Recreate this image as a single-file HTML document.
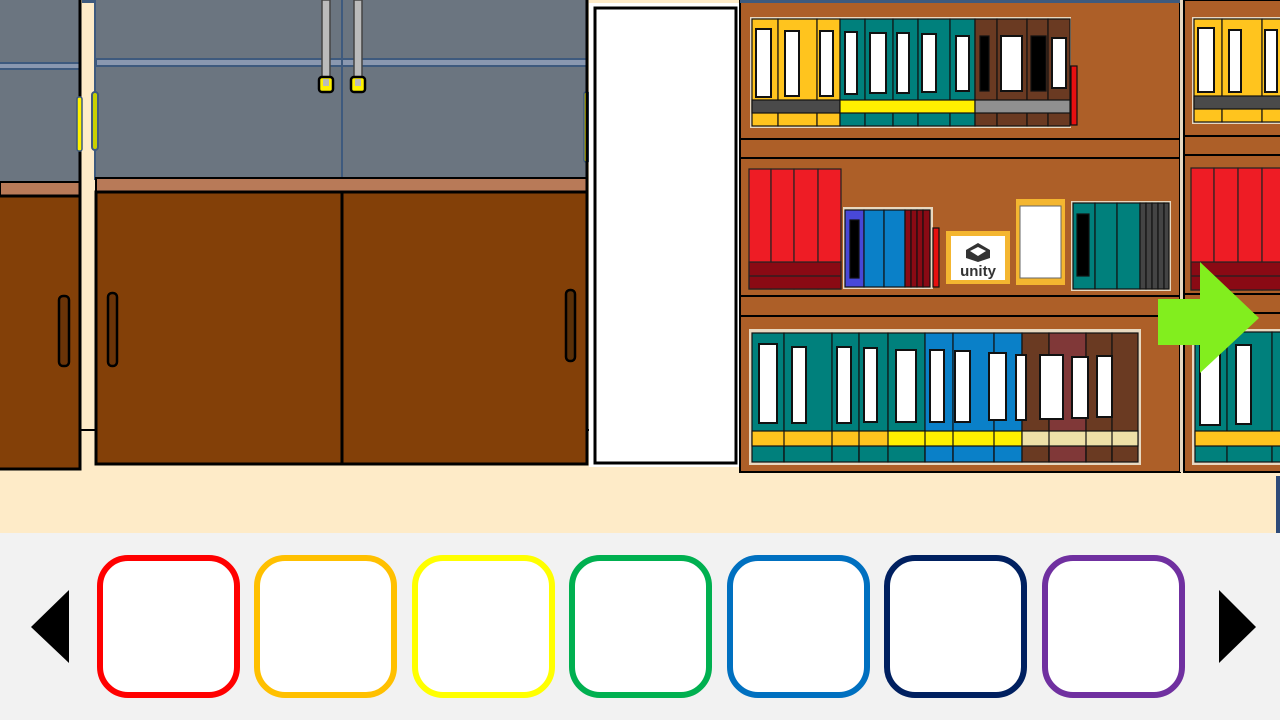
<!DOCTYPE html>
<html><head><meta charset="utf-8"><style>
html,body{margin:0;padding:0;width:1280px;height:720px;overflow:hidden;background:#F2F2F2}
svg{display:block}
</style></head><body>
<svg width="1280" height="720" viewBox="0 0 1280 720" xmlns="http://www.w3.org/2000/svg">
<rect x="0" y="0" width="1280" height="533" fill="#FEEBC8"/>
<rect x="0" y="533" width="1280" height="187" fill="#F2F2F2"/>

<!-- left cabinet -->
<rect x="0" y="0" width="80" height="183" fill="#6B7580"/>
<rect x="0" y="62" width="80" height="8" fill="#3E5A7E"/>
<rect x="0" y="64" width="80" height="4" fill="#8A98B0"/>
<rect x="0" y="182" width="80" height="14" fill="#B87A58" stroke="#000" stroke-width="2"/>
<rect x="-2" y="196" width="82" height="273" fill="#834008" stroke="#000" stroke-width="3"/>
<line x1="80" y1="0" x2="80" y2="470" stroke="#000" stroke-width="3"/>
<rect x="77" y="97" width="5" height="54" rx="2" fill="#FFF200" stroke="#3E5A7E" stroke-width="1.5"/>
<rect x="59" y="296" width="10" height="70" rx="4" fill="#6B3408" stroke="#000" stroke-width="2.5"/>
<rect x="82" y="0" width="12" height="3" fill="#3E5A7E"/>
<line x1="80" y1="430" x2="95" y2="430" stroke="#000" stroke-width="2"/>

<!-- middle cabinet -->
<rect x="94" y="0" width="493" height="180" fill="#6B7580"/>
<line x1="95" y1="0" x2="95" y2="180" stroke="#3E5A7E" stroke-width="2"/>
<rect x="95" y="58" width="492" height="9" fill="#3E5A7E"/>
<rect x="97" y="60" width="490" height="5" fill="#8A98B0"/>
<line x1="342" y1="0" x2="342" y2="180" stroke="#3E5A7E" stroke-width="2"/>
<rect x="92" y="92" width="6" height="58" rx="3" fill="#C8D000" stroke="#3E5A7E" stroke-width="2"/>
<rect x="584" y="92" width="5" height="70" rx="2" fill="#FFF200" stroke="#3E5A7E" stroke-width="1.5"/>
<rect x="322" y="0" width="8" height="82" fill="#BBB" stroke="#444" stroke-width="1.5"/>
<rect x="354" y="0" width="8" height="82" fill="#BBB" stroke="#444" stroke-width="1.5"/>
<rect x="319" y="77" width="14" height="15" rx="3" fill="#FFF200" stroke="#000" stroke-width="2.5"/>
<rect x="351" y="77" width="14" height="15" rx="3" fill="#FFF200" stroke="#000" stroke-width="2.5"/>
<rect x="323" y="79" width="6" height="7" fill="#BBB"/>
<rect x="355" y="79" width="6" height="7" fill="#BBB"/>
<rect x="96" y="178" width="491" height="14" fill="#B87A58" stroke="#000" stroke-width="2"/>
<rect x="96" y="192" width="491" height="272" fill="#834008" stroke="#000" stroke-width="3"/>
<line x1="342" y1="192" x2="342" y2="464" stroke="#000" stroke-width="3"/>
<rect x="108" y="293" width="9" height="73" rx="4" fill="#6B3408" stroke="#000" stroke-width="2.5"/>
<rect x="566" y="290" width="9" height="71" rx="4" fill="#5A3008" stroke="#000" stroke-width="2.5"/>
<line x1="587" y1="0" x2="587" y2="465" stroke="#000" stroke-width="3"/>
<line x1="587" y1="430" x2="594" y2="430" stroke="#000" stroke-width="2"/>

<!-- white door -->
<rect x="589" y="3" width="150" height="464" fill="#fff"/>
<rect x="595" y="8" width="141" height="455" fill="#fff" stroke="#000" stroke-width="3"/>

<!-- bookshelf main -->
<rect x="740" y="0" width="440" height="472" fill="#AD5F28" stroke="#000" stroke-width="2"/>
<rect x="740" y="0" width="440" height="3" fill="#3E5A7E"/>
<line x1="740" y1="139" x2="1180" y2="139" stroke="#000" stroke-width="2"/>
<line x1="740" y1="158" x2="1180" y2="158" stroke="#000" stroke-width="2"/>
<line x1="740" y1="296" x2="1180" y2="296" stroke="#000" stroke-width="2"/>
<line x1="740" y1="316" x2="1180" y2="316" stroke="#000" stroke-width="2"/>
<rect x="1180" y="0" width="4" height="472" fill="#E8D8C0"/>
<rect x="1184" y="0" width="100" height="472" fill="#AD5F28" stroke="#000" stroke-width="2"/>
<line x1="1184" y1="136" x2="1280" y2="136" stroke="#000" stroke-width="2"/>
<line x1="1184" y1="155" x2="1280" y2="155" stroke="#000" stroke-width="2"/>
<line x1="1184" y1="294" x2="1280" y2="294" stroke="#000" stroke-width="2"/>
<line x1="1184" y1="313" x2="1280" y2="313" stroke="#000" stroke-width="2"/>
<rect x="1276" y="476" width="4" height="57" fill="#2E4A78"/>

<!-- top row books -->
<rect x="750" y="17" width="321" height="111" fill="#E8D8C0"/>
<g stroke="#111" stroke-width="1.2">
<rect x="752" y="19" width="26" height="107" fill="#FFC41E"/>
<rect x="778" y="19" width="39" height="107" fill="#FFC41E"/>
<rect x="817" y="19" width="23" height="107" fill="#FFC41E"/>
<rect x="840" y="19" width="25" height="107" fill="#00807C"/>
<rect x="865" y="19" width="28" height="107" fill="#00807C"/>
<rect x="893" y="19" width="25" height="107" fill="#00807C"/>
<rect x="918" y="19" width="32" height="107" fill="#00807C"/>
<rect x="950" y="19" width="25" height="107" fill="#00807C"/>
<rect x="975" y="19" width="22" height="107" fill="#6A3A22"/>
<rect x="997" y="19" width="30" height="107" fill="#6A3A22"/>
<rect x="1027" y="19" width="21" height="107" fill="#6A3A22"/>
<rect x="1048" y="19" width="22" height="107" fill="#6A3A22"/>
<rect x="752" y="100" width="88" height="13" fill="#4A4A4A"/>
<rect x="840" y="100" width="135" height="13" fill="#FFF000"/>
<rect x="975" y="100" width="95" height="13" fill="#909090"/>
<rect x="756" y="29" width="15" height="68" fill="#fff" stroke-width="2"/>
<rect x="785" y="31" width="14" height="65" fill="#fff" stroke-width="2"/>
<rect x="820" y="31" width="13" height="65" fill="#fff" stroke-width="2"/>
<rect x="845" y="32" width="12" height="62" fill="#fff" stroke-width="2"/>
<rect x="870" y="33" width="16" height="60" fill="#fff" stroke-width="2"/>
<rect x="897" y="33" width="12" height="60" fill="#fff" stroke-width="2"/>
<rect x="922" y="34" width="14" height="58" fill="#fff" stroke-width="2"/>
<rect x="956" y="36" width="13" height="55" fill="#fff" stroke-width="2"/>
<rect x="980" y="36" width="9" height="55" fill="#000"/>
<rect x="1001" y="36" width="21" height="55" fill="#fff" stroke-width="2"/>
<rect x="1031" y="36" width="15" height="55" fill="#000"/>
<rect x="1052" y="38" width="14" height="50" fill="#fff" stroke-width="2"/>
<rect x="1071" y="66" width="6" height="59" fill="#E81010"/>
</g>
<!-- right shelf top books -->
<rect x="1192" y="17" width="90" height="107" fill="#E8D8C0"/>
<g stroke="#111" stroke-width="1.2">
<rect x="1194" y="19" width="28" height="103" fill="#FFC41E"/>
<rect x="1222" y="19" width="40" height="103" fill="#FFC41E"/>
<rect x="1262" y="19" width="22" height="103" fill="#FFC41E"/>
<rect x="1194" y="96" width="90" height="13" fill="#4A4A4A"/>
<rect x="1198" y="28" width="16" height="64" fill="#fff" stroke-width="2"/>
<rect x="1229" y="30" width="12" height="62" fill="#fff" stroke-width="2"/>
<rect x="1265" y="30" width="12" height="62" fill="#fff" stroke-width="2"/>
</g>

<!-- middle row -->
<g stroke="#222" stroke-width="1.2">
<rect x="749" y="169" width="22" height="120" fill="#EE1C25"/>
<rect x="771" y="169" width="23" height="120" fill="#EE1C25"/>
<rect x="794" y="169" width="24" height="120" fill="#EE1C25"/>
<rect x="818" y="169" width="23" height="120" fill="#EE1C25"/>
<rect x="749" y="262" width="92" height="27" fill="#8A0A14"/>
<line x1="749" y1="276" x2="841" y2="276"/>
<rect x="1191" y="168" width="23" height="122" fill="#EE1C25"/>
<rect x="1214" y="168" width="24" height="122" fill="#EE1C25"/>
<rect x="1238" y="168" width="24" height="122" fill="#EE1C25"/>
<rect x="1262" y="168" width="22" height="122" fill="#EE1C25"/>
<rect x="1191" y="262" width="93" height="28" fill="#8A0A14"/>
<line x1="1191" y1="276" x2="1284" y2="276"/>
</g>
<rect x="843" y="207" width="90" height="82" fill="#E8D8C0"/>
<g stroke="#111" stroke-width="1.2">
<rect x="845" y="210" width="19" height="77" fill="#4848D8"/>
<rect x="850" y="220" width="9" height="58" fill="#000"/>
<rect x="864" y="210" width="20" height="77" fill="#0A80C8"/>
<rect x="884" y="210" width="21" height="77" fill="#0A80C8"/>
<rect x="905" y="210" width="6" height="77" fill="#8A0A14"/>
<rect x="911" y="210" width="6" height="77" fill="#8A0A14"/>
<rect x="917" y="210" width="6" height="77" fill="#8A0A14"/>
<rect x="923" y="210" width="7" height="77" fill="#8A0A14"/>
<rect x="933" y="228" width="6" height="59" fill="#E81010"/>
</g>
<rect x="946" y="231" width="64" height="53" fill="#F4B630"/>
<rect x="951" y="236" width="54" height="44" fill="#fff"/>
<path d="M966 250 L978 243 L990 250 L990 258 L978 262 L966 258 Z M970 251 L978 247 L986 251 L978 256 Z" fill="#333" fill-rule="evenodd"/>
<text x="978" y="276" font-family="Liberation Sans, sans-serif" font-weight="bold" font-size="15" fill="#333" text-anchor="middle">unity</text>
<rect x="1016" y="199" width="49" height="86" fill="#F4B630"/>
<rect x="1020" y="206" width="41" height="72" fill="#fff" stroke="#666" stroke-width="1"/>
<rect x="1071" y="201" width="100" height="90" fill="#E8D8C0"/>
<g stroke="#111" stroke-width="1.2">
<rect x="1073" y="203" width="22" height="86" fill="#00807C"/>
<rect x="1077" y="214" width="12" height="62" fill="#000"/>
<rect x="1095" y="203" width="22" height="86" fill="#00807C"/>
<rect x="1117" y="203" width="23" height="86" fill="#00807C"/>
<rect x="1140" y="203" width="6" height="86" fill="#444"/>
<rect x="1146" y="203" width="6" height="86" fill="#444"/>
<rect x="1152" y="203" width="6" height="86" fill="#444"/>
<rect x="1158" y="203" width="6" height="86" fill="#444"/>
<rect x="1164" y="203" width="5" height="86" fill="#444"/>
</g>

<!-- bottom row -->
<rect x="749" y="329" width="392" height="136" fill="#E8D8C0"/>
<g stroke="#111" stroke-width="1.2">
<rect x="752" y="333" width="32" height="129" fill="#00807C"/>
<rect x="784" y="333" width="48" height="129" fill="#00807C"/>
<rect x="832" y="333" width="27" height="129" fill="#00807C"/>
<rect x="859" y="333" width="29" height="129" fill="#00807C"/>
<rect x="888" y="333" width="37" height="129" fill="#00807C"/>
<rect x="925" y="333" width="28" height="129" fill="#0A80C8"/>
<rect x="953" y="333" width="41" height="129" fill="#0A80C8"/>
<rect x="994" y="333" width="28" height="129" fill="#0A80C8"/>
<rect x="1022" y="333" width="27" height="129" fill="#6A3A22"/>
<rect x="1049" y="333" width="37" height="129" fill="#803838"/>
<rect x="1086" y="333" width="26" height="129" fill="#6A3A22"/>
<rect x="1112" y="333" width="26" height="129" fill="#6A3A22"/>
<rect x="752" y="431" width="173" height="15" fill="#FFC41E"/>
<rect x="888" y="431" width="134" height="15" fill="#FFF000"/>
<rect x="1022" y="431" width="116" height="15" fill="#EEE0A8"/>
<line x1="784" y1="431" x2="784" y2="462"/><line x1="832" y1="431" x2="832" y2="462"/><line x1="859" y1="431" x2="859" y2="462"/><line x1="925" y1="431" x2="925" y2="462"/><line x1="953" y1="431" x2="953" y2="462"/><line x1="994" y1="431" x2="994" y2="462"/><line x1="1049" y1="431" x2="1049" y2="462"/><line x1="1086" y1="431" x2="1086" y2="462"/><line x1="1112" y1="431" x2="1112" y2="462"/>
<rect x="759" y="344" width="18" height="79" fill="#fff" stroke-width="2"/>
<rect x="792" y="347" width="14" height="76" fill="#fff" stroke-width="2"/>
<rect x="837" y="347" width="14" height="76" fill="#fff" stroke-width="2"/>
<rect x="864" y="348" width="13" height="74" fill="#fff" stroke-width="2"/>
<rect x="896" y="350" width="20" height="72" fill="#fff" stroke-width="2"/>
<rect x="930" y="350" width="14" height="72" fill="#fff" stroke-width="2"/>
<rect x="955" y="351" width="15" height="71" fill="#fff" stroke-width="2"/>
<rect x="989" y="353" width="17" height="67" fill="#fff" stroke-width="2"/>
<rect x="1016" y="355" width="10" height="65" fill="#fff" stroke-width="2"/>
<rect x="1040" y="355" width="23" height="64" fill="#fff" stroke-width="2"/>
<rect x="1072" y="357" width="16" height="61" fill="#fff" stroke-width="2"/>
<rect x="1097" y="356" width="15" height="61" fill="#fff" stroke-width="2"/>
</g>
<!-- right shelf bottom books -->
<rect x="1192" y="329" width="92" height="136" fill="#E8D8C0"/>
<g stroke="#111" stroke-width="1.2">
<rect x="1195" y="332" width="32" height="130" fill="#00807C"/>
<rect x="1227" y="332" width="45" height="130" fill="#00807C"/>
<rect x="1272" y="332" width="12" height="130" fill="#00807C"/>
<rect x="1195" y="431" width="89" height="15" fill="#FFC41E"/>
<rect x="1200" y="345" width="20" height="80" fill="#fff" stroke-width="2"/>
<rect x="1236" y="345" width="15" height="79" fill="#fff" stroke-width="2"/>
</g>

<!-- green arrow -->
<rect x="1158" y="299" width="44" height="46" fill="#82EE1E"/>
<polygon points="1200,262 1259,318 1200,373" fill="#82EE1E"/>

<!-- bottom inventory -->
<polygon points="31,627 69,590 69,663" fill="#000"/>
<polygon points="1256,627 1219,590 1219,663" fill="#000"/>
<g fill="#fff" stroke-width="6">
<rect x="100" y="558" width="137" height="137" rx="28" stroke="#FF0000"/>
<rect x="257" y="558" width="137" height="137" rx="28" stroke="#FFC000"/>
<rect x="415" y="558" width="137" height="137" rx="28" stroke="#FFFF00"/>
<rect x="572" y="558" width="137" height="137" rx="28" stroke="#00B050"/>
<rect x="730" y="558" width="137" height="137" rx="28" stroke="#0070C0"/>
<rect x="887" y="558" width="137" height="137" rx="28" stroke="#002060"/>
<rect x="1045" y="558" width="137" height="137" rx="28" stroke="#7030A0"/>
</g>
</svg>
</body></html>
